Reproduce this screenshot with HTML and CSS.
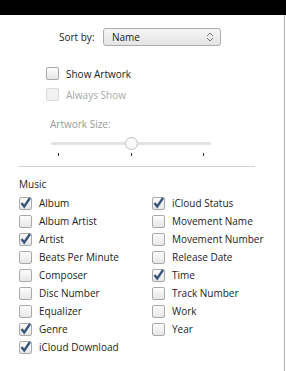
FILE: index.html
```html
<!DOCTYPE html>
<html lang="en">
<head>
    <meta charset="UTF-8">
    <meta name="viewport" content="width=device-width, initial-scale=1.0">
    <title>View Options</title>
    <link rel="stylesheet" href="styles.css">
</head>
<body>
    <div class="titlebar"></div>
    <div class="panel">
        <div class="sort-row">
            <span class="sort-label">Sort by:</span>
            <div class="select">
                <span>Name</span>
                <svg class="arrows" width="8" height="10" viewBox="0 0 8 10">
                    <path d="M1 4 L4 1 L7 4 M1 6 L4 9 L7 6" fill="none" stroke="#777" stroke-width="1"/>
                </svg>
            </div>
        </div>
        <div class="artwork">
            <label class="check"><span class="box"></span>Show Artwork</label>
            <label class="check disabled"><span class="box"></span>Always Show</label>
        </div>
        <div class="size-label">Artwork Size:</div>
        <div class="slider">
            <div class="track"></div>
            <div class="thumb"></div>
            <div class="ticks"><i></i><i></i><i></i></div>
        </div>
        <hr class="sep">
        <div class="section-title">Music</div>
        <div class="columns">
            <div class="col">
                <label class="check"><span class="box"><svg class="tick" viewBox="0 0 13 13"><path d="M2.5 6 L5.2 9.5 L11 1"/></svg></span>Album</label>
                <label class="check"><span class="box"></span>Album Artist</label>
                <label class="check"><span class="box"><svg class="tick" viewBox="0 0 13 13"><path d="M2.5 6 L5.2 9.5 L11 1"/></svg></span>Artist</label>
                <label class="check"><span class="box"></span>Beats Per Minute</label>
                <label class="check"><span class="box"></span>Composer</label>
                <label class="check"><span class="box"></span>Disc Number</label>
                <label class="check"><span class="box"></span>Equalizer</label>
                <label class="check"><span class="box"><svg class="tick" viewBox="0 0 13 13"><path d="M2.5 6 L5.2 9.5 L11 1"/></svg></span>Genre</label>
                <label class="check"><span class="box"><svg class="tick" viewBox="0 0 13 13"><path d="M2.5 6 L5.2 9.5 L11 1"/></svg></span>iCloud Download</label>
            </div>
            <div class="col">
                <label class="check"><span class="box"><svg class="tick" viewBox="0 0 13 13"><path d="M2.5 6 L5.2 9.5 L11 1"/></svg></span>iCloud Status</label>
                <label class="check"><span class="box"></span>Movement Name</label>
                <label class="check"><span class="box"></span>Movement Number</label>
                <label class="check"><span class="box"></span>Release Date</label>
                <label class="check"><span class="box"><svg class="tick" viewBox="0 0 13 13"><path d="M2.5 6 L5.2 9.5 L11 1"/></svg></span>Time</label>
                <label class="check"><span class="box"></span>Track Number</label>
                <label class="check"><span class="box"></span>Work</label>
                <label class="check"><span class="box"></span>Year</label>
            </div>
        </div>
    </div>
</body>
</html>
```

FILE: styles.css
```css
body {
    margin: 0;
    background-color: white;
    color: #222;
    font-family: "Open Sans", "Noto Sans", sans-serif;
    font-size: 10px;
    line-height: 14px;
}
.titlebar {
    height: 15px;
    background-color: #000;
}
.panel {
    width: 285px;
    height: 356px;
    border-right: 1px solid #b0b0b0;
    box-sizing: border-box;
}
.sort-row {
    display: flex;
    align-items: center;
    padding: 13px 0 0 59px;
    height: 18px;
}
.sort-label {
    width: 44px;
}
.select {
    width: 118px;
    height: 18px;
    box-sizing: border-box;
    border: 1px solid #acacac;
    border-radius: 3px;
    background: linear-gradient(#f6f6f6, #e4e4e4);
    display: flex;
    align-items: center;
    justify-content: space-between;
    padding: 0 6px 0 8px;
}
.check {
    display: flex;
    align-items: center;
    height: 18px;
}
.box {
    position: relative;
    width: 13px;
    height: 13px;
    box-sizing: border-box;
    border: 1px solid #a9a9a9;
    border-radius: 2px;
    background: linear-gradient(#fdfdfd, #e6e6e6);
    margin-right: 7px;
    flex-shrink: 0;
}
.tick {
    position: absolute;
    left: -1px;
    top: -1px;
    width: 13px;
    height: 13px;
    overflow: visible;
}
.tick path {
    fill: none;
    stroke: #36557a;
    stroke-width: 2.3;
}
.check.disabled {
    color: #a8a8a8;
}
.check.disabled .box {
    border-color: #d8d8d8;
    background: #f2f2f2;
}
.artwork {
    padding: 17px 0 0 46px;
}
.artwork .check {
    height: 21px;
}
.size-label {
    padding: 12px 0 0 50px;
    color: #999;
}
.slider {
    position: relative;
    width: 160px;
    height: 25px;
    margin-left: 51px;
}
.track {
    position: relative;
    top: 11px;
    height: 3px;
    background-color: #e2e2e2;
    border-radius: 2px;
}
.thumb {
    position: absolute;
    left: 74px;
    top: 6px;
    width: 11px;
    height: 11px;
    border: 1px solid #bdbdbd;
    border-radius: 50%;
    background-color: #fafafa;
}
.ticks {
    display: flex;
    justify-content: space-between;
    padding: 19px 7px 0 7px;
}
.ticks i {
    width: 1px;
    height: 3px;
    background-color: #333;
}
.sep {
    margin: 10px 0 0 18px;
    width: 237px;
    height: 0;
    border: none;
    border-top: 1px solid #d4d4d4;
}
.section-title {
    padding: 10px 0 0 19px;
}
.columns {
    display: flex;
    padding-left: 19px;
    margin-top: 3px;
}
.col:first-child {
    width: 133px;
}
```
